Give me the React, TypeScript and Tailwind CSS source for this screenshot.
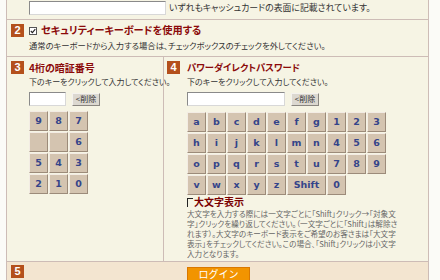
import React from "react";

const jp = "font-['Noto_Sans_CJK_JP','Noto_Sans',sans-serif] [font-feature-settings:'palt']";

function Badge({ n }: { n: string }) {
  return (
    <div className="w-[13px] h-[13px] shrink-0 bg-[#b4501c] text-white text-[11px] leading-none font-bold flex items-center justify-center font-['Liberation_Sans',Arial,sans-serif]">
      {n}
    </div>
  );
}

function Key({ k, wide }: { k: string; wide?: boolean }) {
  return (
    <div
      className={
        (wide ? "col-span-2 " : "") +
        "h-[20px] flex items-center justify-center bg-[#d4c4b0] border border-t-[#f3ece4] border-l-[#f3ece4] border-r-[#9c8b7a] border-b-[#9c8b7a] text-[#34448a] text-[9.5px] font-bold leading-none font-['DejaVu_Sans',Verdana,sans-serif]"
      }
    >
      {k}
    </div>
  );
}

function DelBtn() {
  return (
    <div className={"h-[13px] w-[28px] justify-center flex items-center bg-[#dcd8d0] border border-t-[#f4f2ee] border-l-[#f4f2ee] border-r-[#8a8680] border-b-[#8a8680] text-[#333] text-[8px] leading-none " + jp}>
      &lt;削除
    </div>
  );
}

function Input({ w }: { w: string }) {
  return <div className={w + " h-[14px] bg-white border border-t-[#8a8a8a] border-l-[#8a8a8a] border-r-[#d8d8d8] border-b-[#d8d8d8]"} />;
}

export default function App() {
  const left = [["9", "8", "7"], ["", "", "6"], ["5", "4", "3"], ["2", "1", "0"]];
  const right = [
    ["a", "b", "c", "d", "e", "f", "g", "1", "2", "3"],
    ["h", "i", "j", "k", "l", "m", "n", "4", "5", "6"],
    ["o", "p", "q", "r", "s", "t", "u", "7", "8", "9"],
  ];
  const lines = [
    "大文字を入力する際には一文字ごとに「Shift」クリック→「対象文",
    "字」クリックを繰り返してください。（一文字ごとに「Shift」は解除さ",
    "れます）。大文字のキーボード表示をご希望のお客さまは「大文字",
    "表示」をチェックしてください。この場合、「Shift」クリックは小文字",
    "入力となります。",
  ];
  return (
    <div className={"w-[440px] h-[280px] overflow-hidden bg-[#fbfbf7] " + jp}>
      <div className="ml-[6px] w-[423px] h-[280px] border-l border-r border-[#cdbcb6] bg-[#f6f4e4] flex flex-col">
        {/* row 1 */}
        <div className="h-[20px] shrink-0 border-b border-[#cdbcb6] flex items-start pt-[1px] pl-[22px]">
          <Input w="w-[137px]" />
          <div className="ml-[3px] whitespace-nowrap text-[8.9px] leading-[14px] text-[#333]">いずれもキャッシュカードの表面に記載されています。</div>
        </div>
        {/* row 2 */}
        <div className="h-[37px] shrink-0 border-b border-[#cdbcb6] flex pt-[4px] pl-[4px]">
          <Badge n="2" />
          <div className="ml-[5px] flex flex-col">
            <div className="flex items-center h-[13px]">
              <div className="w-[8px] h-[8px] border border-[#555] bg-white flex items-center justify-center">
                <svg width="6" height="6" viewBox="0 0 6 6"><path d="M0.8 3 L2.4 4.6 L5.3 1.2" stroke="#222" strokeWidth="1.1" fill="none" /></svg>
              </div>
              <div className="ml-[4px] whitespace-nowrap text-[10.2px] font-bold text-[#8b0a0a] leading-none">セキュリティーキーボードを使用する</div>
            </div>
            <div className="mt-[2px] whitespace-nowrap text-[8.3px] leading-[12px] text-[#333]">通常のキーボードから入力する場合は、チェックボックスのチェックを外してください。</div>
          </div>
        </div>
        {/* rows 3 and 4 */}
        <div className="h-[205px] shrink-0 border-b border-[#cdbcb6] flex">
          <div className="w-[157px] shrink-0 border-r border-[#cdbcb6] flex pt-[4px] pl-[4px]">
            <Badge n="3" />
            <div className="ml-[5px] flex flex-col">
              <div className="h-[13px] flex items-center whitespace-nowrap text-[10px] font-bold text-[#8b0a0a] leading-none">4桁の暗証番号</div>
              <div className="mt-[2px] whitespace-nowrap text-[8px] leading-[12px] text-[#333]">下のキーをクリックして入力してください。</div>
              <div className="mt-[4px] flex items-center gap-[6px]">
                <Input w="w-[37px]" />
                <DelBtn />
              </div>
              <div className="mt-[5px] grid grid-cols-[repeat(3,19px)] gap-[1px]">
                {left.flat().map((k, i) => (
                  <Key key={i} k={k} />
                ))}
              </div>
            </div>
          </div>
          <div className="flex-1 flex pt-[4px] pl-[3px]">
            <Badge n="4" />
            <div className="ml-[7px] flex flex-col">
              <div className="h-[13px] flex items-center whitespace-nowrap text-[9.3px] font-bold text-[#8b0a0a] leading-none">パワーダイレクトパスワード</div>
              <div className="mt-[2px] whitespace-nowrap text-[8px] leading-[12px] text-[#333]">下のキーをクリックして入力してください。</div>
              <div className="mt-[4px] flex items-center gap-[6px]">
                <Input w="w-[98px]" />
                <DelBtn />
              </div>
              <div className="mt-[6px] grid grid-cols-[repeat(10,19px)] gap-[1px]">
                {right.flat().map((k, i) => (
                  <Key key={i} k={k} />
                ))}
                {["v", "w", "x", "y", "z"].map((k) => (
                  <Key key={k} k={k} />
                ))}
                <Key k="Shift" wide />
                <Key k="0" />
              </div>
              <div className="mt-[1px] flex items-center h-[12px]">
                <div className="w-[6px] h-[9px] border-t border-l border-[#222]" />
                <div className="ml-[1px] whitespace-nowrap text-[10px] font-bold text-[#7a0000] leading-none">大文字表示</div>
              </div>
              <div className="mt-[1px] text-[7.6px] leading-[10px] text-[#666]">
                {lines.map((l) => (
                  <div key={l} className="whitespace-nowrap">{l}</div>
                ))}
              </div>
            </div>
          </div>
        </div>
        {/* row 5 */}
        <div className="flex-1 bg-[#f3e5d0] flex pt-[3px] pl-[4px]">
          <Badge n="5" />
          <div className="ml-[163px] mt-[2px] w-[63px] h-[16px] bg-[#f29400] border border-[#d97800] text-white text-[10px] flex items-start justify-center pt-[1px] leading-none [font-feature-settings:normal]">
            ログイン
          </div>
        </div>
      </div>
    </div>
  );
}
